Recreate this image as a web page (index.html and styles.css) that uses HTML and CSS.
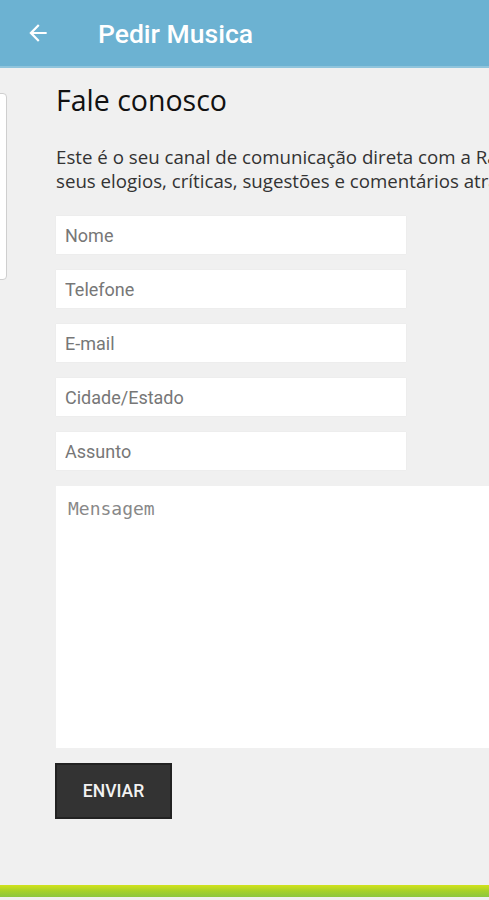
FILE: index.html
```html
<!DOCTYPE html>
<html lang="pt-BR">
<head>
    <meta charset="UTF-8">
    <meta name="viewport" content="width=device-width, initial-scale=1.0">
    <title>Pedir Musica</title>
    <link rel="stylesheet" href="styles.css">
</head>
<body>
    <div class="header">
        <span class="back-icon">
            <svg width="26" height="26" viewBox="0 0 24 24"><path d="M20 11H7.83l5.59-5.59L12 4l-8 8 8 8 1.41-1.41L7.83 13H20v-2z" fill="#fff"/></svg>
        </span>
        <h1>Pedir Musica</h1>
    </div>

    <div class="page">
        <div class="side-card"></div>
        <div class="content">
            <h2>Fale conosco</h2>
            <p class="intro">Este é o seu canal de comunicação direta com a Rádio. Envie<br>seus elogios, críticas, sugestões e comentários através do formulário abaixo.</p>

            <form class="contact-form">
                <input type="text" placeholder="Nome">
                <input type="text" placeholder="Telefone">
                <input type="text" placeholder="E-mail">
                <input type="text" placeholder="Cidade/Estado">
                <input type="text" placeholder="Assunto">
                <textarea placeholder="Mensagem"></textarea>
                <div class="actions">
                    <button type="button">ENVIAR</button>
                </div>
            </form>
        </div>
    </div>

    <div class="footer-bar"></div>
</body>
</html>
```

FILE: styles.css
```css
html, body {
    margin: 0;
    padding: 0;
    overflow: hidden;
}
body {
    width: 489px;
    height: 900px;
    background-color: #f0f0f0;
    font-family: "Open Sans", Arial, sans-serif;
    display: flex;
    flex-direction: column;
}
.header {
    height: 66px;
    background-color: #6cb2d2;
    border-bottom: 2px solid #8fc4dc;
    display: flex;
    align-items: center;
    flex-shrink: 0;
}
.back-icon {
    width: 26px;
    height: 26px;
    margin-left: 25px;
    display: flex;
}
.header h1 {
    margin: 0 0 0 47px;
    font-family: Roboto, Arial, sans-serif;
    font-weight: 500;
    font-size: 26.5px;
    color: #fff;
}
.page {
    flex: 1;
    display: flex;
    position: relative;
}
.side-card {
    position: absolute;
    left: -8px;
    top: 25px;
    width: 13px;
    height: 185px;
    background-color: #fff;
    border: 1px solid #cfcfcf;
    border-radius: 4px;
}
.content {
    padding-left: 56px;
    width: 800px;
    flex-shrink: 0;
}
.content h2 {
    margin: 14px 0 0;
    font-size: 28.5px;
    font-weight: 400;
    color: #111;
    line-height: 36px;
}
.intro {
    margin: 27px 0 0;
    font-size: 18.7px;
    line-height: 24px;
    color: #333;
    white-space: nowrap;
}
.contact-form {
    margin-top: 23px;
    display: flex;
    flex-direction: column;
}
.contact-form input {
    width: 350px;
    height: 38px;
    box-sizing: border-box;
    border: none;
    background-color: #fff;
    padding: 0 9px;
    margin-bottom: 16px;
    font-family: Roboto, Arial, sans-serif;
    font-size: 18px;
    color: #333;
    box-shadow: 0 0 1px rgba(0, 0, 0, 0.08);
}
.contact-form input::placeholder {
    color: #777;
}
.contact-form textarea {
    width: 600px;
    height: 262px;
    box-sizing: border-box;
    border: none;
    background-color: #fff;
    padding: 12px 12px;
    resize: none;
    font-family: "DejaVu Sans Mono", monospace;
    font-size: 18px;
}
.contact-form textarea::placeholder {
    color: #888;
}
.actions {
    margin-top: 15px;
}
.actions button {
    width: 117px;
    height: 56px;
    background-color: #333;
    border: 2px solid #222;
    color: #f2f2f2;
    font-family: Roboto, Arial, sans-serif;
    font-weight: 500;
    font-size: 17.5px;
    cursor: pointer;
    margin-left: -1px;
}
.footer-bar {
    height: 12px;
    margin-bottom: 3px;
    flex-shrink: 0;
    background: linear-gradient(#d2e21a, #a6d12a 50%, #8cc63f);
}
```
